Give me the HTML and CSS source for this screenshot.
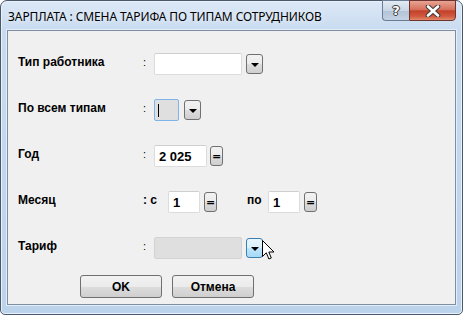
FILE: index.html
```html
<!DOCTYPE html>
<html lang="ru">
<head>
<meta charset="utf-8">
<title>Зарплата</title>
<link rel="stylesheet" href="styles.css">
</head>
<body>
<div class="window">
  <div class="titlebar">
    <div class="title">ЗАРПЛАТА : СМЕНА ТАРИФА ПО ТИПАМ СОТРУДНИКОВ</div>
    <div class="caption-btns">
      <div class="cap-help">?</div>
      <div class="cap-close">
        <svg width="16" height="12" viewBox="0 0 16 12"><path d="M3 1.5 L13 10.5 M13 1.5 L3 10.5" stroke="#3b3b3b" stroke-width="4.6" stroke-linecap="round"/><path d="M3 1.5 L13 10.5 M13 1.5 L3 10.5" stroke="#fff" stroke-width="2.6" stroke-linecap="round"/></svg>
      </div>
    </div>
  </div>
  <div class="client">
    <div class="row">
      <span class="label">Тип работника</span>
      <span class="colon">:</span>
      <span class="field w88"></span>
      <span class="btn drop g4"><i class="tri"></i></span>
    </div>
    <div class="row">
      <span class="label">По всем типам</span>
      <span class="colon">:</span>
      <span class="field focus w25"><i class="caret"></i></span>
      <span class="btn drop g5"><i class="tri"></i></span>
    </div>
    <div class="row">
      <span class="label">Год</span>
      <span class="colon">:</span>
      <span class="field w53 val">2 025</span>
      <span class="btn eq g3">=</span>
    </div>
    <div class="row">
      <span class="label">Месяц</span>
      <span class="colon wide">: с</span>
      <span class="field w32 val">1</span>
      <span class="btn eq g4">=</span>
      <span class="po">по</span>
      <span class="field w32 val">1</span>
      <span class="btn eq g4">=</span>
    </div>
    <div class="row">
      <span class="label">Тариф</span>
      <span class="colon">:</span>
      <span class="field disabled w88"></span>
      <span class="btn drop hover g4"><i class="tri"></i></span>
      <svg class="cursor" width="13" height="21" viewBox="0 0 13 21"><path d="M0.5 0.5 L0.5 16.5 L4.3 12.8 L6.9 19 L9.3 18 L6.8 12 L12 12 Z" fill="#fff" stroke="#000" stroke-width="1" stroke-linejoin="miter"/></svg>
    </div>
    <div class="actions">
      <span class="pbtn">OK</span>
      <span class="pbtn">Отмена</span>
    </div>
  </div>
</div>
</body>
</html>
```

FILE: styles.css
```css
html, body {
  margin: 0;
  padding: 0;
  background: #ffffff;
}
body {
  width: 463px;
  height: 315px;
  overflow: hidden;
}
.window {
  box-sizing: border-box;
  width: 463px;
  height: 315px;
  border: 1px solid #4a5869;
  border-radius: 7px 7px 5px 5px;
  background: linear-gradient(to bottom, #dce8f6 0px, #c8dbf0 30px, #bcd3ec 100%);
  padding: 0 6px 9px 6px;
  display: flex;
  flex-direction: column;
  box-shadow: inset 0 0 0 1px #e9f1fb;
}
.titlebar {
  height: 29px;
  display: flex;
  align-items: flex-start;
  justify-content: space-between;
  flex: none;
}
.title {
  font-family: "Noto Sans", "Open Sans", sans-serif;
  font-size: 12px;
  color: #000;
  padding: 7px 0 0 1px;
  letter-spacing: -0.1px;
  text-shadow: 0 0 6px rgba(255,255,255,0.9);
}
.caption-btns {
  display: flex;
  margin-top: -1px;
}
.cap-help {
  box-sizing: border-box;
  width: 27px;
  height: 21px;
  border: 1px solid #6b7d94;
  border-right: none;
  border-radius: 0 0 0 4px;
  background: linear-gradient(to bottom, #e3ebf4 0%, #c9d6e5 50%, #b2c3d7 51%, #c4d3e4 100%);
  font-family: "DejaVu Sans", sans-serif;
  font-weight: bold;
  font-size: 13px;
  color: #fff;
  text-align: center;
  line-height: 19px;
  text-shadow: 0 0 1px #333, 0 0 1px #333, 1px 0 0 #444, -1px 0 0 #444, 0 1px 0 #444, 0 -1px 0 #444;
}
.cap-close {
  box-sizing: border-box;
  width: 47px;
  height: 21px;
  border: 1px solid #6e3530;
  border-radius: 0 0 4px 0;
  background: linear-gradient(to bottom, #e8a493 0%, #d6705c 45%, #c2412a 52%, #d1583e 80%, #e08a6a 100%);
  display: flex;
  align-items: center;
  justify-content: center;
}
.client {
  flex: 1;
  box-sizing: border-box;
  background: #f0f0f0;
  border: 1px solid #7d8ea3;
  box-shadow: 0 0 0 1px #e4edf8;
  padding: 22px 0 0 10px;
  font-family: "Liberation Sans", Arial, sans-serif;
  font-size: 12px;
  font-weight: bold;
  color: #000;
}
.row {
  display: flex;
  align-items: center;
  height: 22px;
  margin-bottom: 24px;
  position: relative;
}
.label {
  width: 125px;
  flex: none;
  position: relative;
  top: -2px;
}
.colon {
  width: 11px;
  flex: none;
  position: relative;
  top: -2px;
  font-weight: normal;
  font-size: 11px;
}
.colon.wide {
  width: 25px;
  font-weight: bold;
  font-size: 12px;
}
.field {
  box-sizing: border-box;
  height: 22px;
  background: #fff;
  border: 1px solid #dcdcdc;
  border-top-color: #cfcfcf;
  border-radius: 2px;
  flex: none;
  display: flex;
  align-items: center;
  padding-left: 4px;
  font-size: 13px;
}
.w88 { width: 88px; }
.w25 { width: 25px; }
.w53 { width: 53px; }
.w32 { width: 32px; }
.field.focus {
  background: #dfdfdf;
  border-color: #7eb4ea;
}
.field.disabled {
  background: #dfdfdf;
  border-color: #d3d3d3;
}
.caret {
  display: block;
  width: 1px;
  height: 13px;
  background: #000;
  margin-left: -1px;
}
.btn {
  box-sizing: border-box;
  height: 20px;
  border: 1px solid #707070;
  border-radius: 3px;
  background: linear-gradient(to bottom, #f2f2f2 0%, #ebebeb 50%, #dddddd 51%, #cfcfcf 100%);
  flex: none;
  display: flex;
  align-items: center;
  justify-content: center;
}
.drop { width: 17px; }
.eq {
  width: 13px;
  font-family: "DejaVu Sans", sans-serif;
  font-size: 11px;
  font-weight: bold;
  line-height: 1;
}
.g3 { margin-left: 3px; }
.g4 { margin-left: 4px; }
.g5 { margin-left: 5px; }
.btn.hover {
  border-color: #3c7fb1;
  background: linear-gradient(to bottom, #eaf6fd 0%, #d9f0fc 50%, #bee6fd 51%, #a7d9f5 100%);
}
.tri {
  display: block;
  width: 0;
  height: 0;
  border-left: 4px solid transparent;
  border-right: 4px solid transparent;
  border-top: 4px solid #000;
  margin-top: 1px;
}
.po {
  width: 21px;
  margin-left: 30px;
  flex: none;
  position: relative;
  top: -2px;
}
.cursor {
  position: absolute;
  left: 244px;
  top: 3px;
}
.actions {
  display: flex;
  gap: 10px;
  padding-left: 62px;
  margin-top: -8px;
}
.pbtn {
  box-sizing: border-box;
  width: 82px;
  height: 23px;
  border: 1px solid #707070;
  border-radius: 3px;
  background: linear-gradient(to bottom, #f2f2f2 0%, #ebebeb 50%, #dddddd 51%, #cfcfcf 100%);
  display: flex;
  align-items: center;
  justify-content: center;
  font-size: 12px;
}
```
